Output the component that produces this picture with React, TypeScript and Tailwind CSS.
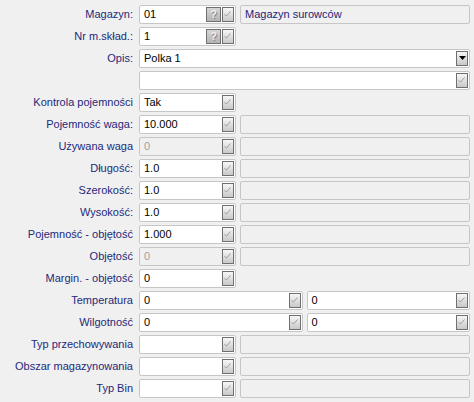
import React from "react";

const font = { fontFamily: '"Liberation Sans", Arial, sans-serif' };

function Tick() {
  return (
    <svg width="7" height="6" viewBox="0 0 7 6" className="absolute right-[2px] bottom-[4px]">
      <path d="M0.5 3.5 L2.5 5 L6.5 0.5" fill="none" stroke="#9c9c9c" strokeWidth="1" />
    </svg>
  );
}

function CheckBtn() {
  return (
    <div className="relative h-full w-[12px] shrink-0 border border-[#6f6f6f] bg-gradient-to-b from-[#f6f6f6] to-[#c9c9c9]">
      <Tick />
    </div>
  );
}

function HelpBtn() {
  return (
    <div className="flex h-full w-[15px] shrink-0 items-center justify-center border border-[#6f6f6f] bg-gradient-to-b from-[#d6d6d6] to-[#b4b4b4] text-[11px] font-bold leading-none text-[#eeeeee] [text-shadow:1px_1px_0_#8a8a8a]">
      ?
    </div>
  );
}

function DropBtn() {
  return (
    <div className="flex h-full w-[12px] shrink-0 items-center justify-center border border-[#6f6f6f] bg-gradient-to-b from-[#f6f6f6] to-[#c9c9c9]">
      <svg width="7" height="4" viewBox="0 0 7 4">
        <path d="M0 0 H7 L3.5 4 Z" fill="#000" />
      </svg>
    </div>
  );
}

type FieldProps = {
  value?: string;
  disabled?: boolean;
  buttons?: React.ReactNode;
  className?: string;
  navy?: boolean;
};

function Field({ value = "", disabled, buttons, className = "", navy }: FieldProps) {
  return (
    <div
      className={`flex h-[19px] items-stretch gap-[1px] rounded-[2px] border border-[#c6c6c6] p-[1px] ${
        disabled ? "bg-[#f0f0f0]" : "bg-white"
      } ${className}`}
    >
      <div
        className={`flex flex-1 items-center overflow-hidden pl-[3px] text-[11px] ${
          navy ? "text-[#1e2476]" : disabled ? "text-[#a0a0a0]" : "text-black"
        }`}
      >
        {value}
      </div>
      {buttons}
    </div>
  );
}

function Row({ label, children }: { label: string; children: React.ReactNode }) {
  return (
    <div className="flex h-[22px] items-center">
      <div className="w-[134px] shrink-0 pr-[1px] text-right text-[11px] text-[#24297a]">{label}</div>
      <div className="ml-[5px] flex w-[331px] items-center gap-[4px]">{children}</div>
    </div>
  );
}

function ShortRow({ label, value = "", disabled }: { label: string; value?: string; disabled?: boolean }) {
  return (
    <Row label={label}>
      <Field value={value} disabled={disabled} buttons={<CheckBtn />} className="w-[97px] shrink-0" />
      <Field disabled className="flex-1" />
    </Row>
  );
}

function HalfRow({ label, a, b }: { label: string; a: string; b: string }) {
  return (
    <Row label={label}>
      <Field value={a} buttons={<CheckBtn />} className="flex-1" />
      <Field value={b} buttons={<CheckBtn />} className="flex-1" />
    </Row>
  );
}

export default function App() {
  return (
    <div className="h-[402px] w-[474px] bg-[#f0f0f0] pt-[3px]" style={font}>
      <Row label="Magazyn:">
        <Field
          value="01"
          buttons={
            <>
              <HelpBtn />
              <CheckBtn />
            </>
          }
          className="w-[97px] shrink-0"
        />
        <Field value="Magazyn surowców" disabled navy className="flex-1" />
      </Row>
      <Row label="Nr m.skład.:">
        <Field
          value="1"
          buttons={
            <>
              <HelpBtn />
              <CheckBtn />
            </>
          }
          className="w-[97px] shrink-0"
        />
      </Row>
      <Row label="Opis:">
        <Field value="Polka 1" buttons={<DropBtn />} className="flex-1" />
      </Row>
      <Row label="">
        <Field buttons={<CheckBtn />} className="flex-1" />
      </Row>
      <Row label="Kontrola pojemności">
        <Field value="Tak" buttons={<CheckBtn />} className="w-[97px] shrink-0" />
      </Row>
      <ShortRow label="Pojemność waga:" value="10.000" />
      <ShortRow label="Używana waga" value="0" disabled />
      <ShortRow label="Długość:" value="1.0" />
      <ShortRow label="Szerokość:" value="1.0" />
      <ShortRow label="Wysokość:" value="1.0" />
      <ShortRow label="Pojemność - objętość" value="1.000" />
      <ShortRow label="Objętość" value="0" disabled />
      <Row label="Margin. - objętość">
        <Field value="0" buttons={<CheckBtn />} className="w-[97px] shrink-0" />
      </Row>
      <HalfRow label="Temperatura" a="0" b="0" />
      <HalfRow label="Wilgotność" a="0" b="0" />
      <ShortRow label="Typ przechowywania" />
      <ShortRow label="Obszar magazynowania" />
      <ShortRow label="Typ Bin" />
    </div>
  );
}
